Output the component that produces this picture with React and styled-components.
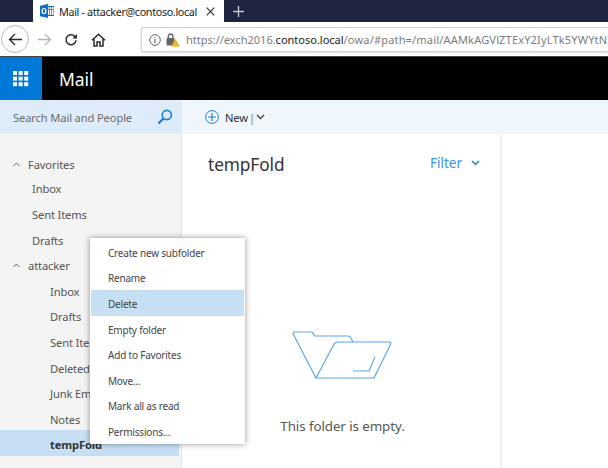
import React from "react";
import styled, { createGlobalStyle } from "styled-components";

const Global = createGlobalStyle`
  html, body { margin: 0; padding: 0; background: #fff; overflow: hidden; }
  body { font-family: "Noto Sans", "Open Sans", sans-serif; }
  #root { width: 608px; height: 468px; overflow: hidden; }
`;
const Page = styled.div`
  width: 608px; height: 468px; display: flex; flex-direction: column; position: relative; overflow: hidden;
`;
const TabBar = styled.div`
  height: 22px; flex: none; background: #1f2440; display: flex; align-items: stretch; padding-left: 33px;
`;
const Tab = styled.div`
  width: 191px; background: #fff; display: flex; align-items: center; box-sizing: border-box; padding: 0 9px 0 7px; gap: 5px;
  svg { flex: none; }
`;
const TabTitle = styled.span`
  flex: 1; font-size: 10.8px; letter-spacing: -0.36px; color: #1c1c20; white-space: nowrap;
`;
const NewTab = styled.div`
  width: 29px; display: flex; align-items: center; justify-content: center;
`;
const NavBar = styled.div`
  height: 35px; flex: none; background: #fff; display: flex; align-items: center; box-sizing: border-box; border-bottom: 1px solid #444; padding-left: 1px;
`;
const BackCircle = styled.div`
  width: 28px; height: 28px; border: 1px solid #b9b9b9; border-radius: 50%; display: flex; align-items: center; justify-content: center; box-sizing: border-box; flex: none;
`;
const NavIcon = styled.div`
  width: 30px; flex: none; display: flex; justify-content: center; margin-left: ${p => p.$ml || 0}px; margin-top: 1px;
`;
const UrlBox = styled.div`
  margin-left: 28px; flex: 1; min-width: 0; height: 25px; box-sizing: border-box; border: 1px solid #cfcfcf; border-right: none; box-shadow: 0 1px 2px rgba(0,0,0,.15);
  display: flex; align-items: center; padding-left: 7px; gap: 5px; overflow: hidden; border-radius: 2px 0 0 2px; margin-top: 1px;
  svg { flex: none; }
`;
const UrlText = styled.span`
  font-size: 11.1px; color: #7d7d7d; white-space: nowrap; letter-spacing: 0.13px; margin-left: 1px;
`;
const UrlOrigin = styled.span`
  letter-spacing: -0.05px;
  b { font-weight: 400; color: #222; }
`;
const AppBar = styled.div`
  height: 43px; flex: none; background: #000; display: flex; align-items: center;
`;
const Waffle = styled.div`
  width: 42px; height: 100%; background: #0078d7; display: flex; align-items: center; justify-content: center;
`;
const AppName = styled.div`
  margin-left: 17px; color: #fff; font-size: 17.5px; letter-spacing: -0.1px;
`;
const SubBar = styled.div`
  height: 34px; flex: none; display: flex; background: #eff6fc;
`;
const SearchBox = styled.div`
  width: 182px; box-sizing: border-box; background: #deecf9; display: flex; align-items: center; justify-content: space-between; padding: 0 8px 0 13px;
  font-size: 11.2px; letter-spacing: -0.15px; color: #6d6d6d; border-right: 1px solid #eaeaea;
`;
const NewButton = styled.div`
  display: flex; align-items: center; margin-left: 23px; font-size: 11.2px; letter-spacing: -0.15px; color: #333; gap: 6px;
`;
const Divider = styled.span`
  color: #777; font-size: 11px; margin: 0 -5px;
`;
const Content = styled.div`
  flex: 1; display: flex; min-height: 0;
`;
const Sidebar = styled.nav`
  width: 182px; box-sizing: border-box; background: #f4f4f4; border-right: 1px solid #e6e6e6; padding-top: 16.5px; flex: none;
`;
const Row = styled.div`
  height: 25.6px; width: 179px; display: flex; align-items: center; box-sizing: border-box; white-space: nowrap; overflow: hidden;
  padding-top: 4px; padding-left: ${p => p.$indent}px; font-size: 11.2px; letter-spacing: -0.15px; color: #555;
  font-weight: ${p => (p.$selected ? 700 : 400)};
  background: ${p => (p.$selected ? "#c7dff3" : "transparent")};
  ${p => p.$selected && "color: #333;"}
  &:first-child { height: 23.6px; }
  svg { margin-right: 8px; }
`;
const ListPane = styled.main`
  width: 320px; box-sizing: border-box; border-right: 2px solid #f0f0f0; flex: none; display: flex; flex-direction: column; position: relative;
`;
const ListHead = styled.div`
  display: flex; justify-content: space-between; align-items: flex-start; padding: 18px 20px 0 26px;
`;
const FolderTitle = styled.h1`
  margin: 0; font-size: 17.3px; font-weight: 400; color: #333; letter-spacing: -0.1px; line-height: 26px;
`;
const Filter = styled.div`
  display: flex; align-items: center; gap: 9px; color: #3b93e6; font-size: 13.5px; line-height: 20px; margin-top: 1px;
`;
const Empty = styled.div`
  margin-top: 153px; display: flex; flex-direction: column; align-items: center; padding-left: 1px;
`;
const EmptyText = styled.div`
  margin-top: 36px; margin-left: 2px; font-size: 13.4px; color: #555; letter-spacing: -0.1px;
`;
const Menu = styled.ul`
  position: absolute; left: 90px; top: 238px; width: 155px; height: 206px; box-sizing: border-box; margin: 0; padding: 1px 1px; list-style: none;
  background: #fff; box-shadow: 0 0 6px rgba(0,0,0,.42);
`;
const MenuItem = styled.li`
  height: 25.6px; box-sizing: border-box; padding-top: 2px; display: flex; align-items: center; padding-left: 17px; font-size: 10px; letter-spacing: -0.2px; color: #444;
  background: ${p => (p.$active ? "#c7dff3" : "transparent")};
`;

const Caret = () => (
  <svg width="7" height="5" viewBox="0 0 7 5" fill="none" stroke="#666" strokeWidth="1"><path d="M.5 4 3.5 1l3 3" /></svg>
);
const sidebarRows = [
  { t: "Favorites", i: 13, c: true }, { t: "Inbox", i: 32 }, { t: "Sent Items", i: 32 }, { t: "Drafts", i: 32 },
  { t: "attacker", i: 13, c: true }, { t: "Inbox", i: 50 }, { t: "Drafts", i: 50 }, { t: "Sent Items", i: 50 },
  { t: "Deleted Items", i: 50 }, { t: "Junk Email", i: 50 }, { t: "Notes", i: 50 }, { t: "tempFold", i: 50, s: true },
];
const menuItems = ["Create new subfolder", "Rename", "Delete", "Empty folder", "Add to Favorites", "Move...", "Mark all as read", "Permissions..."];

export default function App() {
  return (
    <Page>
      <Global />
      <TabBar>
        <Tab>
          <svg width="14" height="14" viewBox="0 0 14 14">
            <rect x="6" y="2.5" width="8" height="9" fill="#fff" stroke="#0f6fc6" />
            <path d="M7 5.5h6M9.5 3v8M11.5 3v8" stroke="#0f6fc6" strokeWidth=".7" />
            <path d="M0 1.8 8 0v14L0 12.2z" fill="#0f6fc6" />
            <ellipse cx="4" cy="7" rx="1.9" ry="2.5" fill="none" stroke="#fff" strokeWidth="1.2" />
          </svg>
          <TabTitle>Mail - attacker@contoso.local</TabTitle>
          <svg width="9" height="9" viewBox="0 0 9 9" stroke="#333" strokeWidth="1.2"><path d="m.7.7 7.6 7.6M8.3.7.7 8.3" /></svg>
        </Tab>
        <NewTab>
          <svg width="13" height="13" viewBox="0 0 13 13" stroke="#c4c6d0" strokeWidth="1.4"><path d="M6.5 1v11M1 6.5h11" /></svg>
        </NewTab>
      </TabBar>
      <NavBar>
        <BackCircle>
          <svg width="15" height="13" viewBox="0 0 15 13" fill="none" stroke="#2a2a2e" strokeWidth="1.4"><path d="M14 6.5H1.5M7 1 1.5 6.5 7 12" /></svg>
        </BackCircle>
        <NavIcon>
          <svg width="15" height="13" viewBox="0 0 15 13" fill="none" stroke="#b5b5b5" strokeWidth="1.3"><path d="M1 6.5h12.5M8 1l5.5 5.5L8 12" /></svg>
        </NavIcon>
        <NavIcon $ml={-3}>
          <svg width="14" height="14" viewBox="0 0 14 14" fill="none" stroke="#2a2a2e" strokeWidth="1.5"><path d="M12 7.2a5 5 0 1 1-1.6-4.1L12.5 5" /><path d="M13 1v4.5H8.5" fill="#2a2a2e" stroke="none" /></svg>
        </NavIcon>
        <NavIcon $ml={-3}>
          <svg width="15" height="14" viewBox="0 0 15 14" fill="none" stroke="#2a2a2e" strokeWidth="1.5"><path d="M1 7.3 7.5 1.2 14 7.3" /><path d="M3 6v7h3V9h3v4h3V6" /></svg>
        </NavIcon>
        <UrlBox>
          <svg width="12" height="12" viewBox="0 0 12 12" fill="none" stroke="#666"><circle cx="6" cy="6" r="5.3" /><path d="M6 5v4M6 3v1.2" strokeWidth="1.2" /></svg>
          <svg width="14" height="14" viewBox="0 0 14 14">
            <rect x="0.5" y="5" width="8" height="7.5" rx="1" fill="#666" />
            <path d="M2.3 5V3.3a2.3 2.3 0 0 1 4.6 0V5" fill="none" stroke="#666" strokeWidth="1.4" />
            <path d="M9.5 6 14 13.5H5z" fill="#f5b21c" />
          </svg>
          <UrlText><UrlOrigin>https://exch2016.<b>contoso.local</b></UrlOrigin>/owa/#path=/mail/AAMkAGVlZTExY2IyLTk5YWYtN</UrlText>
        </UrlBox>
      </NavBar>
      <AppBar>
        <Waffle>
          <svg width="16" height="16" viewBox="0 0 16 16" fill="#fff">
            {[0, 5.6, 11.2].flatMap(y => [0, 5.6, 11.2].map(x => <rect key={`${x}-${y}`} x={x} y={y} width="4" height="4" />))}
          </svg>
        </Waffle>
        <AppName>Mail</AppName>
      </AppBar>
      <SubBar>
        <SearchBox>
          Search Mail and People
          <svg width="16" height="16" viewBox="0 0 16 16" fill="none" stroke="#1e7fd0" strokeWidth="1.6"><circle cx="9.8" cy="6" r="4.6" /><path d="M6.4 9.4 1.4 14.6" strokeWidth="2.2" /></svg>
        </SearchBox>
        <NewButton>
          <svg width="14" height="14" viewBox="0 0 14 14" fill="none" stroke="#1e7fd0" strokeWidth="1"><circle cx="7" cy="7" r="6.4" /><path d="M7 3v8M3 7h8" strokeWidth="1.2" /></svg>
          New
          <Divider>|</Divider>
          <svg width="9" height="6" viewBox="0 0 9 6" fill="none" stroke="#444" strokeWidth="1.3"><path d="m1 1 3.5 3.5L8 1" /></svg>
        </NewButton>
      </SubBar>
      <Content>
        <Sidebar>
          {sidebarRows.map((r, n) => (
            <Row key={n} $indent={r.i} $selected={r.s}>
              {r.c && <Caret />}{r.t}
            </Row>
          ))}
        </Sidebar>
        <ListPane>
          <ListHead>
            <FolderTitle>tempFold</FolderTitle>
            <Filter>
              Filter
              <svg width="9" height="6" viewBox="0 0 9 6" fill="none" stroke="#1e7fd0" strokeWidth="1.5"><path d="m1 1 3.5 3.5L8 1" /></svg>
            </Filter>
          </ListHead>
          <Empty>
            <svg width="100" height="50" viewBox="0 0 100 50" fill="none" stroke="#5aa7e8" strokeWidth="1.2" strokeLinejoin="round">
              <path d="M24 47 1.2 3Q.6 1 2.5 1H19q2 0 2.5 2l1 2H56q2 0 3 2l2 4" />
              <path d="M24 47 41.5 14q1.5-3 4.5-3h51q2.500 0 1.500 2.500L82 47z" />
              <path d="M83 26 77 40H61" />
            </svg>
            <EmptyText>This folder is empty.</EmptyText>
          </Empty>
        </ListPane>
      </Content>
      <Menu>
        {menuItems.map(m => <MenuItem key={m} $active={m === "Delete"}>{m}</MenuItem>)}
      </Menu>
    </Page>
  );
}
